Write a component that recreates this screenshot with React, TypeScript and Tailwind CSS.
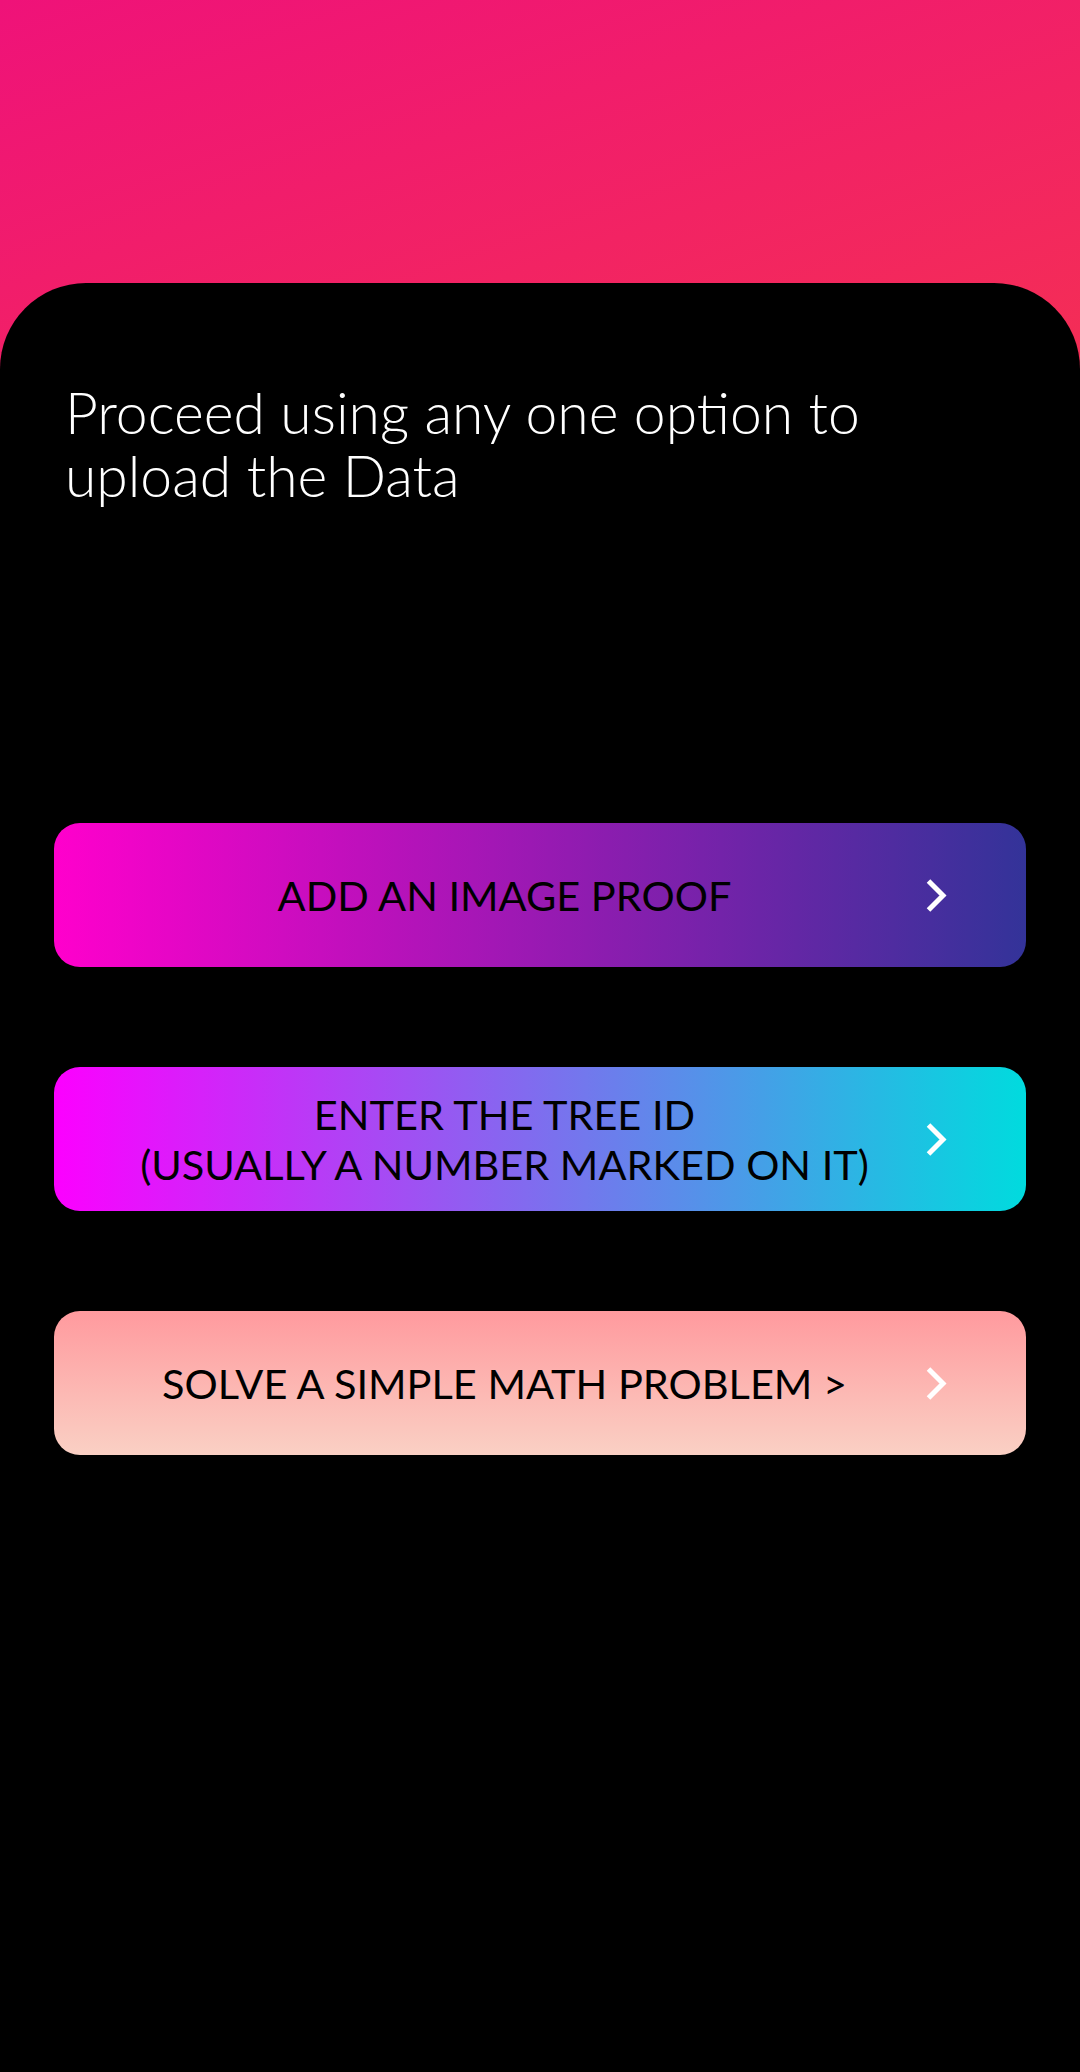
import { ReactNode } from 'react';

const OPTIONS: { key: string; label: ReactNode; bg: string }[] = [
  {
    key: 'image',
    label: 'ADD AN IMAGE PROOF',
    bg: 'bg-linear-to-r/srgb from-[#ff00cc] to-[#333399]',
  },
  {
    key: 'tree',
    label: (
      <>
        ENTER THE TREE ID
        <br />
        (USUALLY A NUMBER MARKED ON IT)
      </>
    ),
    bg: 'bg-linear-to-r/srgb from-[#fc00ff] to-[#00dbde]',
  },
  {
    key: 'math',
    label: 'SOLVE A SIMPLE MATH PROBLEM >',
    bg: 'bg-linear-to-b/srgb from-[#ff9a9e] to-[#fad0c4]',
  },
];

function Chevron() {
  return (
    <svg width="22" height="35" viewBox="0 0 22 35" fill="none" className="shrink-0">
      <path d="M3.5 3 L18 17.5 L3.5 32" stroke="white" strokeWidth="5" strokeLinejoin="miter" />
    </svg>
  );
}

export default function App() {
  return (
    <div className="min-h-[2072px] w-[1080px] flex flex-col bg-black font-['Lato',_'Noto_Sans',_sans-serif]">
      {/* pink header */}
      <div className="h-[370px] shrink-0 bg-linear-to-br/srgb from-[#ef1279] to-[#f42e55]" />

      {/* black sheet */}
      <div className="-mt-[87px] flex-1 rounded-t-[86px] bg-black relative">
        <h1 className="pt-[98px] px-[65px] text-[57px] leading-[63px] font-light text-white">
          Proceed using any one option to
          <br />
          upload the Data
        </h1>

        <div className="mt-[316px] mx-[54px] flex flex-col gap-[100px]">
          {OPTIONS.map(o => (
            <button
              key={o.key}
              className={`h-[144px] w-full rounded-[26px] flex items-center pl-[39px] pr-[70px] ${o.bg}`}
            >
              <span className="flex-1 text-center text-black text-[41.5px] leading-[50px] font-normal">
                {o.label}
              </span>
              <span className="w-[40px] flex justify-center">
                <Chevron />
              </span>
            </button>
          ))}
        </div>
      </div>
    </div>
  );
}
